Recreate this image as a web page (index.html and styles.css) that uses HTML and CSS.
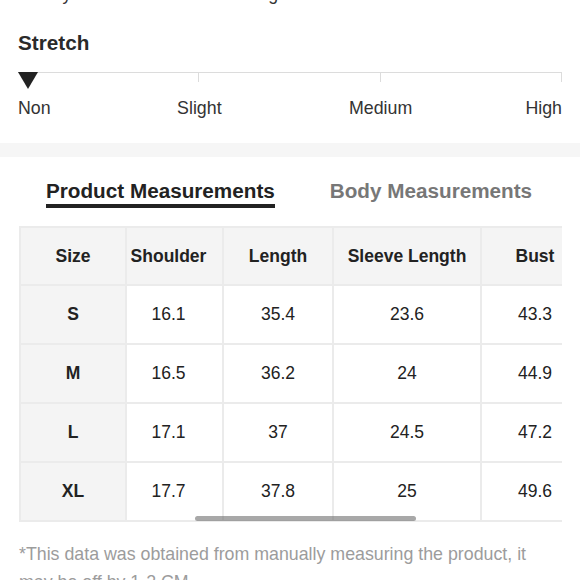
FILE: index.html
```html
<!DOCTYPE html>
<html lang="en">
<head>
<meta charset="utf-8">
<title>Size Info</title>
<link rel="stylesheet" href="styles.css">
</head>
<body>
<div class="fit-row">
  <span>Skinny</span>
  <span>Regular</span>
  <span>Oversized</span>
</div>

<section class="stretch">
  <h2 class="section-title">Stretch</h2>
  <div class="scale">
    <div class="seg"></div>
    <div class="seg"></div>
    <div class="seg"></div>
    <span class="marker"></span>
  </div>
  <div class="labels">
    <span class="lbl lbl-first">Non</span>
    <span class="lbl">Slight</span>
    <span class="lbl">Medium</span>
    <span class="lbl lbl-last">High</span>
  </div>
</section>

<div class="band"></div>

<nav class="tabs">
  <span class="tab active">Product Measurements</span>
  <span class="tab">Body Measurements</span>
</nav>

<div class="table-wrap">
  <table class="size-table">
    <colgroup>
      <col class="c-size">
      <col class="c-shoulder">
      <col class="c-length">
      <col class="c-sleeve">
      <col class="c-bust">
    </colgroup>
    <thead>
      <tr>
        <th>Size</th>
        <th class="sh">Shoulder</th>
        <th>Length</th>
        <th>Sleeve Length</th>
        <th>Bust</th>
      </tr>
    </thead>
    <tbody>
      <tr><th>S</th><td class="sh">16.1</td><td>35.4</td><td>23.6</td><td>43.3</td></tr>
      <tr><th>M</th><td class="sh">16.5</td><td>36.2</td><td>24</td><td>44.9</td></tr>
      <tr><th>L</th><td class="sh">17.1</td><td>37</td><td>24.5</td><td>47.2</td></tr>
      <tr><th>XL</th><td class="sh">17.7</td><td>37.8</td><td>25</td><td>49.6</td></tr>
    </tbody>
  </table>
  <div class="scroll-indicator"></div>
</div>

<p class="note">*This data was obtained from manually measuring the product, it may be off by 1-2 CM.</p>
</body>
</html>
```

FILE: styles.css
```css
html, body {
  margin: 0;
  padding: 0;
  background: #ffffff;
}

body {
  font-family: "Liberation Sans", Arial, sans-serif;
  color: #222222;
  overflow: hidden;
}

.fit-row {
  display: flex;
  justify-content: space-between;
  padding: 0 18px;
  margin-top: -16px;
  font-size: 17.8px;
  line-height: 20px;
  color: #333333;
}

.stretch {
  padding: 0 18px;
  margin-top: 27px;
}

.section-title {
  margin: 0;
  font-size: 20.7px;
  line-height: 24px;
  font-weight: bold;
  color: #2a2a2a;
}

.scale {
  position: relative;
  margin-top: 17px;
  display: grid;
  grid-template-columns: repeat(3, 1fr);
  border-top: 1px solid #dcdcdc;
}

.seg {
  height: 9px;
  border-right: 1px solid #dcdcdc;
}

.marker {
  position: absolute;
  left: 0;
  top: -1px;
  width: 0;
  height: 0;
  border-left: 10px solid transparent;
  border-right: 10px solid transparent;
  border-top: 17px solid #222222;
}

.labels {
  display: flex;
  justify-content: space-between;
  margin-top: 16px;
  font-size: 17.8px;
  line-height: 20px;
  color: #333333;
}

.lbl {
  width: 0;
  display: flex;
  justify-content: center;
  white-space: nowrap;
}

.lbl-first {
  justify-content: flex-start;
}

.lbl-last {
  justify-content: flex-end;
}

.band {
  height: 14px;
  margin-top: 25px;
  background: #f6f6f6;
}

.tabs {
  display: flex;
  gap: 55px;
  padding-left: 46px;
  margin-top: 22px;
}

.tab {
  font-size: 20.7px;
  line-height: 24px;
  font-weight: bold;
  color: #777777;
  padding-bottom: 1px;
}

.tab.active {
  color: #222222;
  border-bottom: 4px solid #222222;
}

.table-wrap {
  position: relative;
  margin: 18px 18px 0 19px;
  overflow: hidden;
}

.size-table {
  table-layout: fixed;
  width: 569px;
  border-collapse: collapse;
  font-size: 17.5px;
  text-align: center;
}

.c-size { width: 106px; }
.c-shoulder { width: 97px; }
.c-length { width: 110px; }
.c-sleeve { width: 148px; }
.c-bust { width: 108px; }

.size-table th,
.size-table td {
  height: 57px;
  padding: 0;
  border: 2px solid #ebebeb;
  color: #222222;
}

.size-table thead th {
  height: 56px;
  background: #f4f4f4;
  font-weight: bold;
}

.size-table tbody th {
  background: #f4f4f4;
  font-weight: bold;
}

.size-table td {
  font-weight: normal;
  background: #ffffff;
}

.size-table .sh {
  padding-right: 12px;
}

.scroll-indicator {
  position: absolute;
  left: 176px;
  bottom: 1px;
  width: 221px;
  height: 5px;
  border-radius: 3px;
  background: rgba(110, 110, 110, 0.6);
}

.note {
  margin: 18px 18px 0 19px;
  font-size: 17.8px;
  line-height: 28px;
  color: #9c9c9c;
}
```
